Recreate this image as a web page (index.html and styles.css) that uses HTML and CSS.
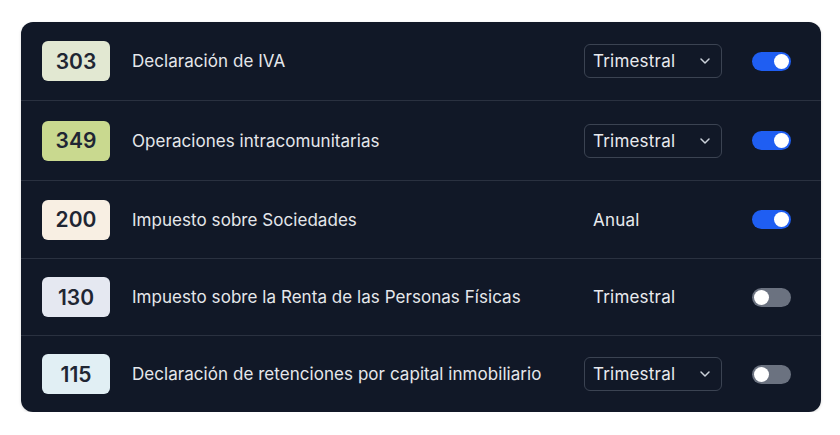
FILE: index.html
```html
<!DOCTYPE html>
<html lang="es">
<head>
<meta charset="utf-8">
<link rel="stylesheet" href="styles.css">
</head>
<body>
<div class="card">
  <div class="row">
    <span class="badge b303">303</span>
    <span class="label">Declaración de IVA</span>
    <div class="freq select"><span>Trimestral</span><svg class="chev" viewBox="0 0 12 8" width="12" height="8"><path d="M2 2l4 4 4-4" fill="none" stroke="#cbd1da" stroke-width="1.5" stroke-linecap="round" stroke-linejoin="round"/></svg></div>
    <span class="toggle on"><span class="knob"></span></span>
  </div>
  <div class="row">
    <span class="badge b349">349</span>
    <span class="label">Operaciones intracomunitarias</span>
    <div class="freq select"><span>Trimestral</span><svg class="chev" viewBox="0 0 12 8" width="12" height="8"><path d="M2 2l4 4 4-4" fill="none" stroke="#cbd1da" stroke-width="1.5" stroke-linecap="round" stroke-linejoin="round"/></svg></div>
    <span class="toggle on"><span class="knob"></span></span>
  </div>
  <div class="row">
    <span class="badge b200">200</span>
    <span class="label">Impuesto sobre Sociedades</span>
    <div class="freq"><span>Anual</span></div>
    <span class="toggle on"><span class="knob"></span></span>
  </div>
  <div class="row">
    <span class="badge b130">130</span>
    <span class="label">Impuesto sobre la Renta de las Personas Físicas</span>
    <div class="freq"><span>Trimestral</span></div>
    <span class="toggle"><span class="knob"></span></span>
  </div>
  <div class="row">
    <span class="badge b115">115</span>
    <span class="label">Declaración de retenciones por capital inmobiliario</span>
    <div class="freq select"><span>Trimestral</span><svg class="chev" viewBox="0 0 12 8" width="12" height="8"><path d="M2 2l4 4 4-4" fill="none" stroke="#cbd1da" stroke-width="1.5" stroke-linecap="round" stroke-linejoin="round"/></svg></div>
    <span class="toggle"><span class="knob"></span></span>
  </div>
</div>
</body>
</html>
```
FILE: styles.css
```css
html, body {
  margin: 0;
  background: #ffffff;
}
body {
  padding: 22px 19px 0 21px;
  font-family: Inter, "Noto Sans", sans-serif;
}
.card {
  width: 800px;
  background: #111827;
  border-radius: 12px;
  overflow: hidden;
  box-shadow: 0 1px 3px rgba(0,0,0,0.15);
}
.row {
  display: flex;
  align-items: center;
  height: 77px;
  padding: 0 30px 0 21px;
  border-top: 1px solid #2a3140;
}
.row:first-child {
  border-top: none;
  height: 78px;
}
.row:nth-child(2) { height: 79px; }
.row:nth-child(4),
.row:nth-child(5) { height: 76px; }
.badge {
  width: 68px;
  height: 40px;
  border-radius: 6px;
  display: flex;
  align-items: center;
  justify-content: center;
  font-size: 21px;
  font-weight: 600;
  color: #1f2633;
  flex: none;
}
.b303 { background: #e2e8d2; }
.b349 { background: #c9d98f; }
.b200 { background: #f8efe3; }
.b130 { background: #e5e8f1; }
.b115 { background: #e1eff4; }
.label {
  flex: 1;
  margin-left: 22px;
  font-size: 17px;
  color: #e5e7eb;
  letter-spacing: 0.05px;
}
.freq {
  width: 138px;
  height: 34px;
  box-sizing: border-box;
  display: flex;
  align-items: center;
  justify-content: space-between;
  padding: 0 9px 0 8px;
  font-size: 17px;
  letter-spacing: 0.2px;
  color: #e8eaee;
  border: 1px solid transparent;
  border-radius: 6px;
  flex: none;
}
.freq.select {
  border-color: #3b4352;
}
.chev {
  margin-right: 1px;
}
.toggle {
  width: 39px;
  height: 19px;
  border-radius: 10px;
  background: #6b7280;
  margin-left: 30px;
  flex: none;
  display: flex;
  align-items: center;
  padding: 0 2px;
  box-sizing: border-box;
}
.toggle.on {
  background: #1f5ef2;
  justify-content: flex-end;
}
.knob {
  width: 15px;
  height: 15px;
  border-radius: 50%;
  background: #ffffff;
}
```
